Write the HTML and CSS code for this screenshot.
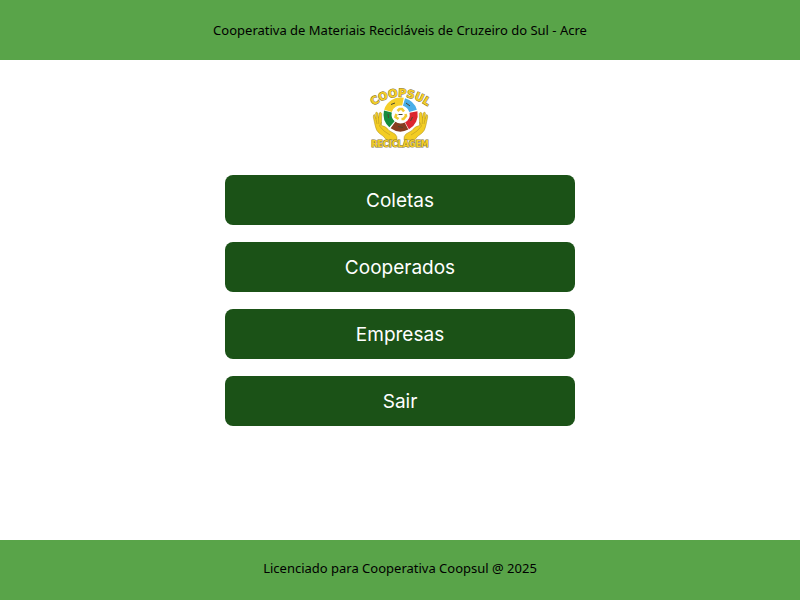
FILE: index.html
```html
<!DOCTYPE html>
<html lang="pt-BR">
<head>
<meta charset="utf-8">
<meta name="viewport" content="width=device-width, initial-scale=1">
<title>Coopsul</title>
<link rel="stylesheet" href="styles.css">
</head>
<body>
<header class="bar">Cooperativa de Materiais Recicláveis de Cruzeiro do Sul - Acre</header>
<main class="content">
  <svg class="logo" viewBox="0 0 60 60" role="img" aria-label="Coopsul Reciclagem">
    <defs>
      <path id="arch" d="M3 18Q30 -1 58 18.500"/>
      <g id="hand">
        <path d="M5 37L3.300 29Q3.300 26 4.600 26.600L6 31L5.600 25Q6.500 23 7.700 25L8.500 30L9.200 25Q10.700 23.500 11.700 25.500L11.500 34L11.500 37.500Q16 38 19 42.500L25 46Q27.500 48 27 52H16.500Q14 48 9.500 45.500Q6 43 5 37Z"/>
        <path class="crease" d="M6 31L7 36M8.500 30L8.800 36M11.500 34L9.500 38L14 43L20 47"/>
      </g>
    </defs>
    <g class="hands">
      <use href="#hand"/>
      <use href="#hand" transform="matrix(-1 0 0 1 61 0)"/>
    </g>
    <circle class="disc" cx="30.500" cy="26.500" r="17.500"/>
    <g class="ring">
      <path class="red" d="M43.500 24A13 13 0 0 1 37 37.800"/>
      <path class="brown" d="M36.500 38A13 13 0 0 1 23 37"/>
      <path class="green" d="M22 36.200A13 13 0 0 1 17.900 23.500"/>
      <path class="yellow" d="M18 22.800A13 13 0 0 1 33 13.700"/>
      <path class="blue" d="M34 14A13 13 0 0 1 43 22.800"/>
    </g>
    <path class="mark" d="M21 16.500L25 15M36 15L40 18M42.500 29L40.500 33M28 38.500L33 39.500M18 26L18.500 30"/>
    <circle class="center" cx="30.500" cy="26.500" r="8.500"/>
    <path class="arrows" d="M27.500 23L29.500 21H32L34 23.500M35.500 26L36 28L33.500 31H31.500M28.500 31L25.500 29L26.500 26"/>
    <path class="mark" d="M28.500 26.500H32.500"/>
    <text class="arch-text"><textPath href="#arch" startOffset="50%">COOPSUL</textPath></text>
    <text class="base-text" x="30" y="59">RECICLAGEM</text>
  </svg>
  <nav class="menu" aria-label="Menu principal">
    <button type="button">Coletas</button>
    <button type="button">Cooperados</button>
    <button type="button">Empresas</button>
    <button type="button">Sair</button>
  </nav>
</main>
<footer class="bar footer">Licenciado para Cooperativa Coopsul @ 2025</footer>
</body>
</html>
```

FILE: styles.css
```css
* {
  box-sizing: border-box;
}

body {
  margin: 0;
  min-height: 100vh;
  display: flex;
  flex-direction: column;
  background: #fff;
  color: #000;
  font-family: "Noto Sans", sans-serif;
}

.bar {
  min-height: 60px;
  padding: 20px;
  background: #59a449;
  font-size: 13px;
  line-height: 20px;
  text-align: center;
}

.footer {
  padding: 18px 20px;
}

.content {
  flex: 1;
  display: flex;
  flex-direction: column;
  align-items: center;
  gap: 27px;
  padding: 28px 20px;
}

.logo {
  width: 60px;
  height: 60px;
  overflow: visible;
}

.menu {
  width: 100%;
  max-width: 350px;
  display: flex;
  flex-direction: column;
  gap: 17px;
}

.menu button {
  height: 50px;
  padding: 2px 0 0;
  border: 0;
  border-radius: 8px;
  background: #1b5217;
  color: #fff;
  font-family: Inter, "Noto Sans", sans-serif;
  font-size: 19px;
  line-height: 24px;
  cursor: pointer;
}

.hands {
  fill: #f3cd24;
  stroke: #a88c25;
  stroke-width: 0.5;
}

.crease {
  fill: none;
}

.disc,
.center {
  fill: #fff;
}

.ring path {
  fill: none;
  stroke-width: 8;
}

.ring .yellow { stroke: #f5cf2b; }
.ring .blue { stroke: #4aaee8; }
.ring .red { stroke: #dc2530; }
.ring .brown { stroke: #873d20; }
.ring .green { stroke: #168c3d; }

.mark {
  fill: none;
  stroke: #4b4930;
  stroke-width: 1;
}

.arrows {
  fill: none;
  stroke: #f2ca32;
  stroke-width: 2.6;
}

.arch-text,
.base-text {
  font-family: "DejaVu Sans", sans-serif;
  font-weight: 700;
  text-anchor: middle;
  fill: #f5cf24;
  stroke: #84743a;
  paint-order: stroke;
}

.arch-text {
  font-size: 11px;
  stroke-width: 1;
}

.base-text {
  font-size: 8px;
  stroke-width: 1;
}
```
